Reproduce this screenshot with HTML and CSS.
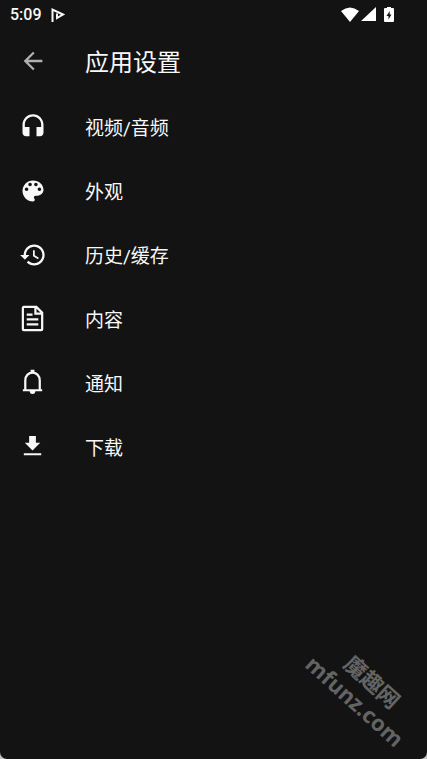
FILE: index.html
```html
<!DOCTYPE html>
<html lang="zh-CN">
<head>
<meta charset="utf-8">
<meta name="viewport" content="width=device-width, initial-scale=1">
<title>应用设置</title>
<link rel="stylesheet" href="styles.css">
</head>
<body>
<div class="screen">
  <div class="status">
    <span class="time">5:09</span>
    <svg class="app-mark" viewBox="0 0 14 16" aria-hidden="true"><path d="M1.500 15V2.500L12 7.500L6 11V6.500" /></svg>
    <div class="signals">
      <svg width="18" height="16" viewBox="0 0 18 16" aria-hidden="true"><path d="M0 4Q9-3 18 4L9 15Z"/></svg>
      <svg width="15" height="15" viewBox="0 0 15 15" aria-hidden="true"><path d="M15 0V14H0Z"/></svg>
      <svg class="battery" width="10" height="16" viewBox="0 0 10 16" aria-hidden="true"><path fill-rule="evenodd" d="M3 0H7V1H9Q10 1 10 2V14Q10 15 9 15H1Q0 15 0 14V2Q0 1 1 1H3ZM5.700 4L2.500 9H4.500V12.500L7.500 7.500H5.700Z"/></svg>
    </div>
  </div>
  <header class="bar">
    <button class="back" type="button" aria-label="返回"><svg class="icon" viewBox="0 0 24 24"><path d="M20 11H7.830l5.590-5.590L12 4l-8 8 8 8 1.410-1.410L7.830 13H20v-2z"/></svg></button>
    <h1>应用设置</h1>
  </header>
  <nav class="menu">
    <a href="#av"><svg class="icon" viewBox="0 0 24 24" aria-hidden="true"><path d="M12 1c-4.970 0-9 4.030-9 9v7c0 1.660 1.340 3 3 3h3v-8H5v-2c0-3.870 3.130-7 7-7s7 3.130 7 7v2h-4v8h3c1.660 0 3-1.340 3-3v-7c0-4.970-4.030-9-9-9z"/></svg><span>视频/音频</span></a>
    <a href="#appearance"><svg class="icon" viewBox="0 0 24 24" aria-hidden="true"><path d="M12 3c-4.970 0-9 4.030-9 9s4.030 9 9 9c.83 0 1.500-.67 1.500-1.500 0-.39-.15-.74-.39-1.010-.23-.26-.38-.61-.38-.99 0-.83.67-1.500 1.500-1.500H16c2.760 0 5-2.240 5-5 0-4.420-4.030-8-9-8zm-5.500 9c-.83 0-1.500-.67-1.500-1.500S5.670 9 6.500 9 8 9.670 8 10.500 7.330 12 6.500 12zm3-4C8.670 8 8 7.330 8 6.500S8.670 5 9.500 5s1.500.67 1.500 1.500S10.330 8 9.500 8zm5 0c-.83 0-1.500-.67-1.500-1.500S13.670 5 14.500 5s1.500.67 1.500 1.500S15.330 8 14.500 8zm3 4c-.83 0-1.500-.67-1.500-1.500S16.670 9 17.500 9s1.500.67 1.500 1.500-.67 1.500-1.500 1.500z"/></svg><span>外观</span></a>
    <a href="#history"><svg class="icon" viewBox="0 0 24 24" aria-hidden="true"><path d="M13 3c-4.970 0-9 4.030-9 9H1l3.890 3.890.07.14L9 12H6c0-3.870 3.130-7 7-7s7 3.130 7 7-3.130 7-7 7c-1.930 0-3.680-.79-4.940-2.060l-1.420 1.420C8.270 19.990 10.510 21 13 21c4.970 0 9-4.030 9-9s-4.030-9-9-9zm-1 5v5l4.280 2.540.72-1.210-3.500-2.080V8H12z"/></svg><span>历史/缓存</span></a>
    <a href="#content"><svg class="icon line" viewBox="0 0 29 29" aria-hidden="true"><path d="M5 2H18L24 8V25Q24 26 23 26H5Q4 26 4 25V3Q4 2 5 2ZM17 2V9H24M8 10H14M8 15H20M8 20H20"/></svg><span>内容</span></a>
    <a href="#notice"><svg class="icon line" viewBox="0 0 29 29" aria-hidden="true"><path d="M4 22H24M6.500 22V12C6.500 1 21.500 1 21.500 12V22M12 2H16"/><path class="solid" d="M11 22H17Q17 26 14 26Q11 26 11 22Z"/></svg><span>通知</span></a>
    <a href="#download"><svg class="icon" viewBox="0 0 29 29" aria-hidden="true"><path d="M10.500 3H17.500V10H22L14 18L6 10H10.500ZM5 21H23V23H5Z"/></svg><span>下载</span></a>
  </nav>
  <div class="watermark"><span>魔趣网</span><span>mfunz.com</span></div>
</div>
</body>
</html>
```
FILE: styles.css
```css
* { box-sizing: border-box; }
html { background: #c4c4c4; }
body { margin: 0; font-family: Roboto, "Noto Sans CJK SC", sans-serif; color: #f8f8f8; }
.screen {
  position: relative;
  min-height: 100vh;
  overflow: hidden;
  background: #131313;
  border-radius: 0 0 7px 7px;
}
svg { display: block; fill: currentColor; }
.status { display: flex; align-items: center; height: 29px; padding: 0 33px 0 10px; }
.time { font-size: 16px; line-height: 28px; font-weight: 500; }
.app-mark { width: 14px; height: 16px; margin-left: 9px; fill: none; stroke: currentColor; stroke-width: 2; }
.signals { display: flex; align-items: center; gap: 2px; margin-left: auto; color: #fff; }
.battery { margin-left: 6px; }
.bar { display: flex; align-items: center; height: 68px; padding-left: 19px; }
.back { width: 66px; padding: 0; border: 0; background: none; color: #b0b0b0; }
.icon { width: 28px; height: 28px; margin-bottom: 4px; flex: none; }
h1 { margin: 0; font-size: 24px; line-height: 36px; font-weight: 400; }
.menu a {
  display: flex;
  align-items: center;
  gap: 38px;
  height: 64px;
  padding-left: 19px;
  color: inherit;
  font-size: 19px;
  line-height: 28px;
  text-decoration: none;
}
.line { fill: none; stroke: currentColor; stroke-width: 2.3; }
.solid { fill: currentColor; stroke: none; }
.watermark {
  position: absolute;
  right: -5px;
  bottom: 42px;
  display: flex;
  flex-direction: column;
  align-items: center;
  width: 136px;
  color: #646464;
  font: 700 22px/26px "Open Sans", "Noto Sans CJK SC", sans-serif;
  transform: rotate(42deg);
}
```
